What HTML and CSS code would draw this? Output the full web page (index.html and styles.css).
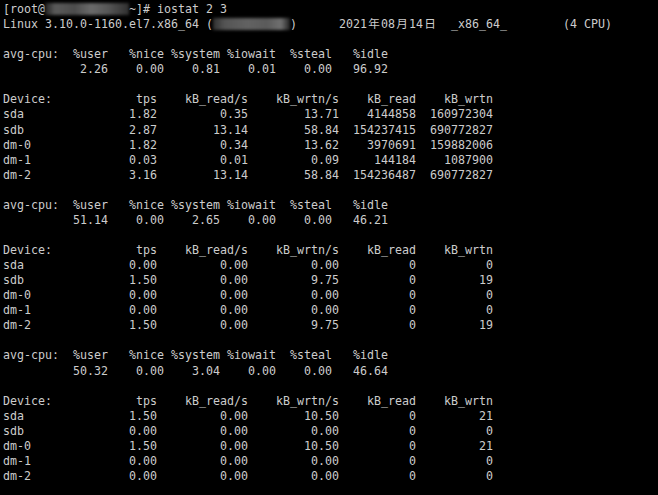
FILE: index.html
```html
<!DOCTYPE html>
<html lang="zh">

<head>
    <meta charset="utf-8">
    <title>iostat</title>
    <link rel="stylesheet" href="styles.css">
</head>

<body>
    <pre class="term">[root@<span class="mask m1"></span>~]# iostat 2 3
Linux 3.10.0-1160.el7.x86_64 (<span class="mask m2"></span>)      <span class="date">2021<i class="wide">年</i>08<i class="wide">月</i>14<i class="wide">日</i></span>  _x86_64_        (4 CPU)

avg-cpu:  %user   %nice %system %iowait  %steal   %idle
           2.26    0.00    0.81    0.01    0.00   96.92

Device:            tps    kB_read/s    kB_wrtn/s    kB_read    kB_wrtn
sda               1.82         0.35        13.71    4144858  160972304
sdb               2.87        13.14        58.84  154237415  690772827
dm-0              1.82         0.34        13.62    3970691  159882006
dm-1              0.03         0.01         0.09     144184    1087900
dm-2              3.16        13.14        58.84  154236487  690772827

avg-cpu:  %user   %nice %system %iowait  %steal   %idle
          51.14    0.00    2.65    0.00    0.00   46.21

Device:            tps    kB_read/s    kB_wrtn/s    kB_read    kB_wrtn
sda               0.00         0.00         0.00          0          0
sdb               1.50         0.00         9.75          0         19
dm-0              0.00         0.00         0.00          0          0
dm-1              0.00         0.00         0.00          0          0
dm-2              1.50         0.00         9.75          0         19

avg-cpu:  %user   %nice %system %iowait  %steal   %idle
          50.32    0.00    3.04    0.00    0.00   46.64

Device:            tps    kB_read/s    kB_wrtn/s    kB_read    kB_wrtn
sda               1.50         0.00        10.50          0         21
sdb               0.00         0.00         0.00          0          0
dm-0              1.50         0.00        10.50          0         21
dm-1              0.00         0.00         0.00          0          0
dm-2              0.00         0.00         0.00          0          0</pre>
</body>

</html>
```

FILE: styles.css
```css
html,
body {
    margin: 0;
    background: #000;
    height: 100%;
    overflow: hidden;
}

.term {
    margin: 0;
    padding: 2px 3px;
    color: #cccccc;
    font-family: "DejaVu Sans Mono", "Noto Sans CJK SC", monospace;
    font-size: 11.63px;
    line-height: 15.06px;
}

/* blurred host name */
.mask {
    display: inline-block;
    height: 12px;
    vertical-align: -2px;
    filter: blur(1.5px);
}

.m1 {
    width: 84px;
    background: linear-gradient(90deg, #222 0%, #5a5a5a 12%, #4c4c4c 35%, #6a6a6a 55%, #565656 75%, #303030 100%);
}

.m2 {
    width: 77px;
    background: linear-gradient(90deg, #303030 0%, #545454 15%, #626262 45%, #5a5a5a 70%, #707070 88%, #222 100%);
}

.date {
    display: inline-block;
}

.wide {
    display: inline-block;
    width: 14px;
    line-height: 12px;
    text-align: center;
    font-style: normal;
    font-family: "Noto Sans CJK SC", sans-serif;
}
```
